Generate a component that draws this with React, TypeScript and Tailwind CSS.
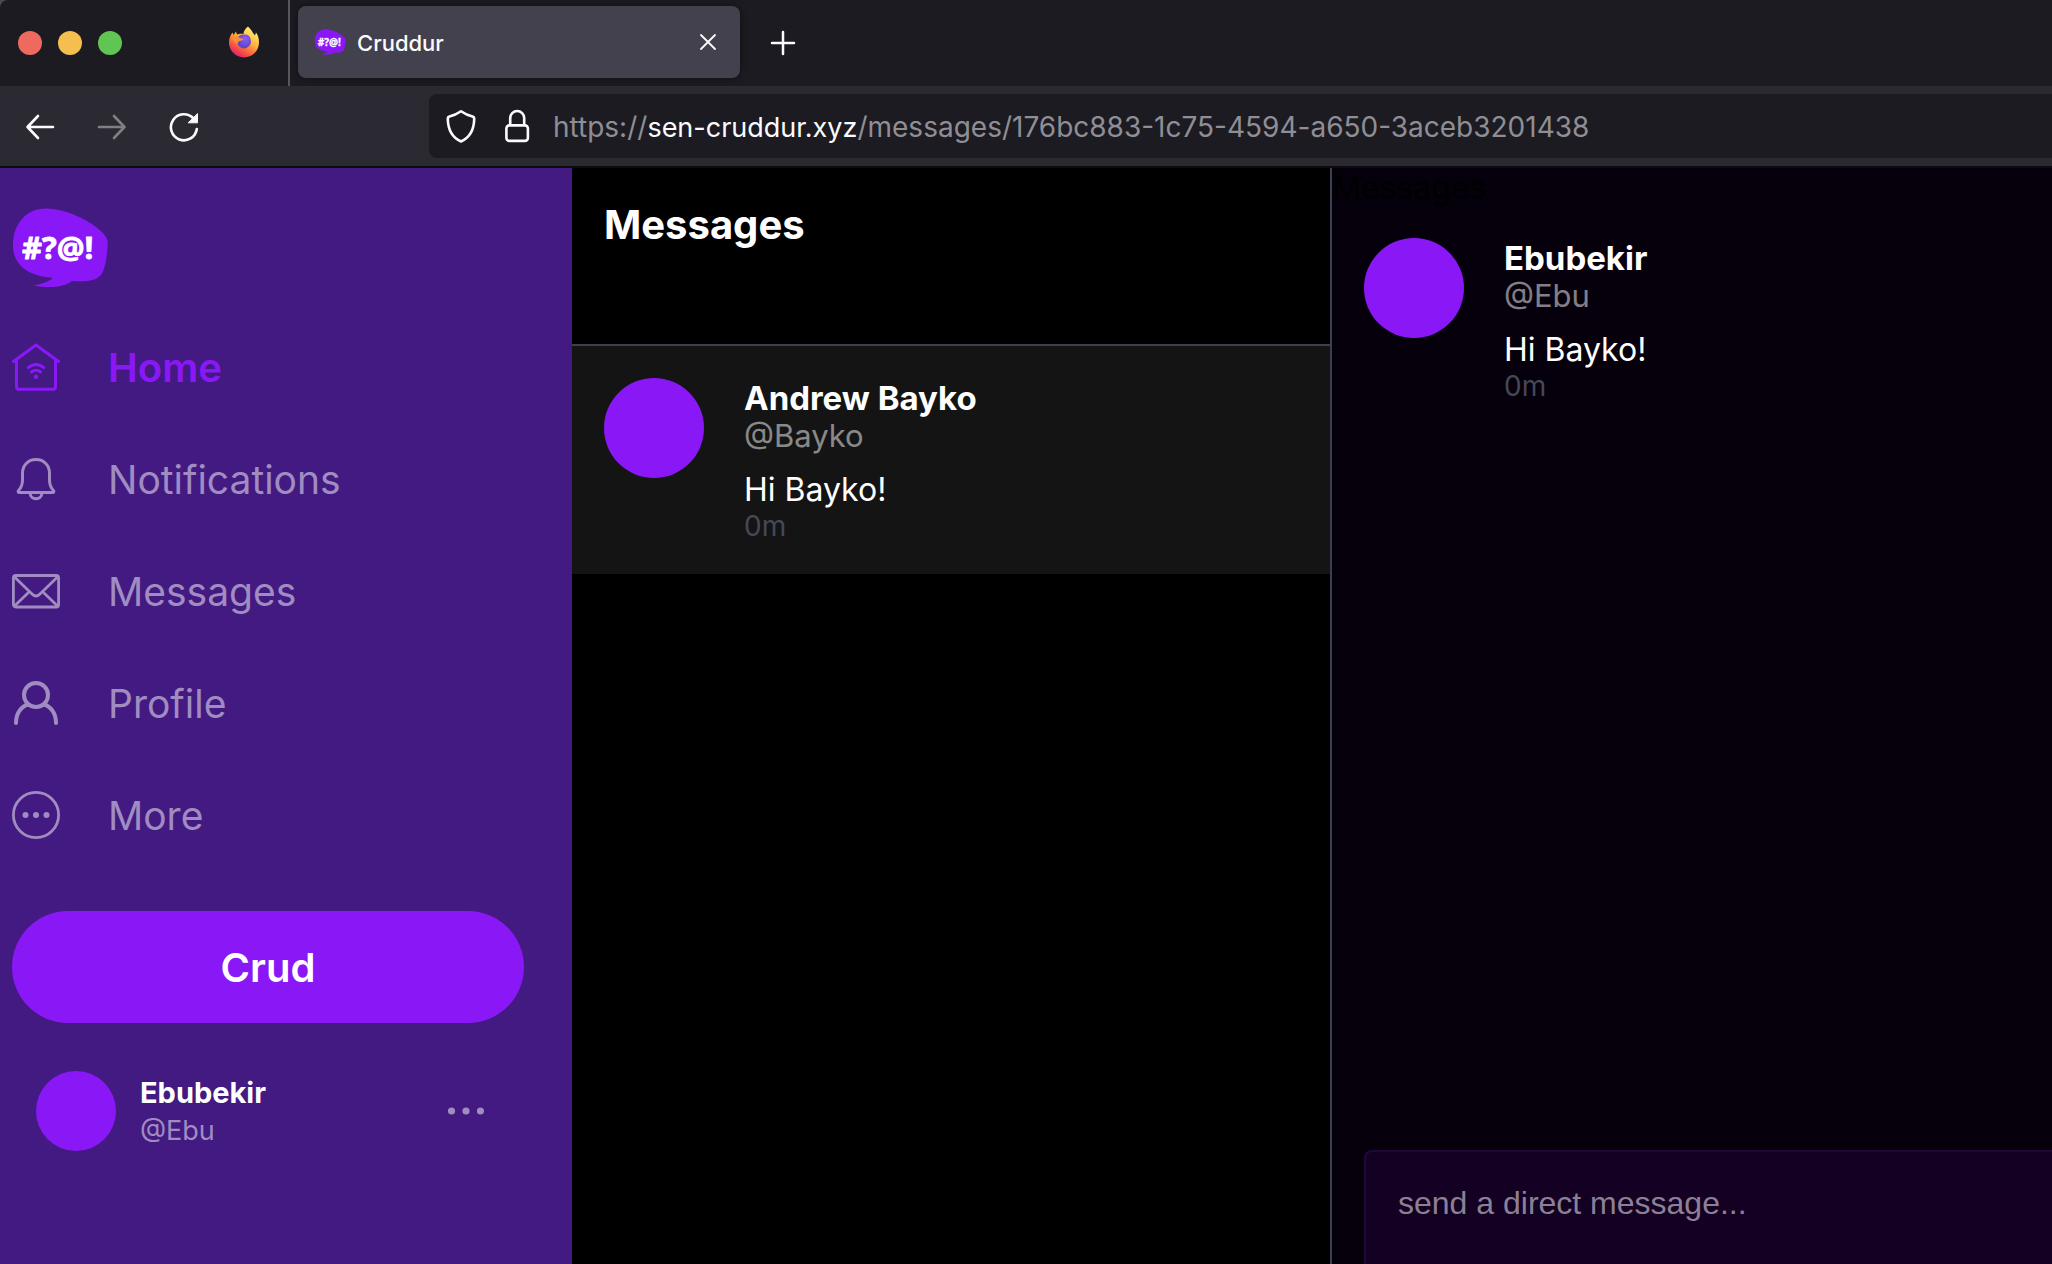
import type { ReactNode } from "react";

function Logo({ className }: { className: string }) {
  return (
    <svg viewBox="0 0 96 80" className={className} aria-hidden="true">
      <path
        d="M34 0.500C14 0.500 1 16 1 37C1 57 16 68 41 70C36 74 29 76 22 77.500C38 80.500 52 79 60 73C74 74 84 73 89 67C93 62 95.700 46 95.700 34C95.700 22 60 0.500 34 0.500Z"
        fill="#8a18f6"
      />
      <text
        x="10"
        y="51"
        fill="#fff"
        stroke="#fff"
        strokeWidth="0.800"
        strokeLinejoin="round"
        className="font-['Open_Sans',sans-serif] text-[31px] font-bold"
      >
        #?@!
      </text>
    </svg>
  );
}

function FirefoxIcon() {
  return (
    <svg viewBox="0 1 32 32" className="size-8 overflow-visible" aria-hidden="true">
      <defs>
        <linearGradient id="flame" x1="0.85" y1="0.1" x2="0.3" y2="1">
          <stop offset="0" stopColor="#fff36b" />
          <stop offset="0.4" stopColor="#ffb340" />
          <stop offset="0.75" stopColor="#f8563f" />
          <stop offset="1" stopColor="#d61f75" />
        </linearGradient>
        <radialGradient id="globe" cx="0.6" cy="0.3" r="0.8">
          <stop offset="0" stopColor="#8f5cf5" />
          <stop offset="1" stopColor="#4f40b8" />
        </radialGradient>
      </defs>
      <path
        d="M20 0.500C22 2.500 23.500 4 25 7L27 9.500L28 6.500C30 9 31 12.500 31 16.500A15 15 0 0 1 1 16.500C1 12 2.500 9 4.500 6.500L5.500 9L8 5.500L9 8.500C11 7.500 13 7.500 15.500 8C15.500 5 17.500 2.500 20 0.500Z"
        fill="url(#flame)"
      />
      <path d="M9 14C9 10 13 8 17 8.500C20 8.500 22 10 22.500 13A6.600 6.600 0 1 1 9.600 18Z" fill="url(#globe)" />
      <path
        d="M4.500 11.500C7 10 10 10.500 12 12L15.500 13C15 14.300 13.500 14.500 11.500 15C10 15.800 9.800 16.500 9.500 18C7 17 4.500 14.500 4.500 11.500Z"
        fill="#fb8f2c"
      />
    </svg>
  );
}

const HomeIcon = (
  <g fill="none" stroke="currentColor" strokeWidth="3" strokeLinecap="round" strokeLinejoin="round">
    <path d="M1.500 18.500L24 2L46.500 18.500" />
    <path d="M4.500 17V43.500Q4.500 46.300 7 46.300H41Q43.500 46.300 43.500 43.500V17" />
    <path d="M16.300 24.500Q24 18.500 31.700 24.500M19.500 29Q24 25.500 28.500 29" />
    <circle cx="24" cy="33.700" r="2.200" fill="currentColor" stroke="none" />
  </g>
);

const BellIcon = (
  <g fill="none" stroke="currentColor" strokeWidth="3" strokeLinecap="round" strokeLinejoin="round">
    <path d="M24 4.500C16 4.500 10.500 10.500 10.500 18V25C10.500 31 9 33 6.500 35.500Q5.500 37.500 7.500 37.500H40.500Q42.500 37.500 41.500 35.500C39 33 37.500 31 37.500 25V18C37.500 10.500 32 4.500 24 4.500Z" />
    <path d="M18.200 38.500C18.200 45.500 29.800 45.500 29.800 38.500" />
  </g>
);

const MailIcon = (
  <g fill="none" stroke="currentColor" strokeWidth="2.800" strokeLinecap="round" strokeLinejoin="round">
    <rect x="1.400" y="8.500" width="45.200" height="31.500" rx="2.500" />
    <path d="M2.500 10L19.500 26.500Q24 31.500 28.500 26.500L45.500 10M2.500 39L16 26M45.500 39L32 26" />
  </g>
);

const ProfileIcon = (
  <g fill="none" stroke="currentColor" strokeWidth="4" strokeLinecap="round">
    <circle cx="24" cy="16" r="12" />
    <path d="M4 44C4 34.500 9 27.500 16 25.500M44 44C44 34.500 39 27.500 32 25.500" />
  </g>
);

const MoreIcon = (
  <g fill="currentColor">
    <circle cx="24" cy="24" r="22.600" fill="none" stroke="currentColor" strokeWidth="2.800" />
    <circle cx="13.500" cy="24" r="3" />
    <circle cx="24" cy="24" r="3" />
    <circle cx="34.500" cy="24" r="3" />
  </g>
);

const navItems: { label: string; icon: ReactNode; active?: boolean }[] = [
  { label: "Home", icon: HomeIcon, active: true },
  { label: "Notifications", icon: BellIcon },
  { label: "Messages", icon: MailIcon },
  { label: "Profile", icon: ProfileIcon },
  { label: "More", icon: MoreIcon },
];

function TabBar() {
  return (
    <div className="flex h-[86px] shrink-0 items-stretch rounded-tl-lg bg-[#1c1b22]">
      <div className="flex w-[290px] items-center border-r-2 border-[#57565d] pl-[18px]">
        <div className="flex gap-4">
          <span className="size-6 rounded-full bg-[#ee6a5f]" />
          <span className="size-6 rounded-full bg-[#f5bf4f]" />
          <span className="size-6 rounded-full bg-[#61c554]" />
        </div>
        <div className="ml-auto pr-7">
          <FirefoxIcon />
        </div>
      </div>
      <div className="my-1.5 ml-2 flex h-[72px] w-[442px] items-center rounded-lg bg-[#42414d] pr-[22px] pl-4 shadow-[0_0_6px_rgba(0,0,0,0.5)]">
        <Logo className="h-[26px] w-8" />
        <span className="ml-[11px] pt-0.5 text-[22px] leading-8 font-medium text-[#fbfbfe]">Cruddur</span>
        <button type="button" aria-label="Close tab" className="ml-auto">
          <svg viewBox="0 0 20 20" className="size-5" stroke="#fbfbfe" strokeWidth="1.800" strokeLinecap="round">
            <path d="M3 3L17 17M17 3L3 17" />
          </svg>
        </button>
      </div>
      <button type="button" aria-label="New tab" className="ml-[30px]">
        <svg viewBox="0 0 26 26" className="size-[26px]" stroke="#fbfbfe" strokeWidth="2.500" strokeLinecap="round">
          <path d="M13 2V24M2 13H24" />
        </svg>
      </button>
    </div>
  );
}

function Toolbar() {
  return (
    <div className="flex h-[82px] shrink-0 items-center border-b-2 border-[#0c0c0d] bg-[#2b2a33] pl-6">
      <div className="flex w-[405px] shrink-0 gap-10">
        <button type="button" aria-label="Back">
          <svg viewBox="0 0 32 32" className="size-8" fill="none" stroke="#fbfbfe" strokeWidth="2.600" strokeLinecap="round" strokeLinejoin="round">
            <path d="M29 17H3.500M14 6L3.500 17L14 28" />
          </svg>
        </button>
        <button type="button" aria-label="Forward" disabled>
          <svg viewBox="0 0 32 32" className="size-8" fill="none" stroke="#807f86" strokeWidth="2.600" strokeLinecap="round" strokeLinejoin="round">
            <path d="M3 17H28.500M18 6L28.500 17L18 28" />
          </svg>
        </button>
        <button type="button" aria-label="Reload">
          <svg viewBox="0 0 32 32" className="size-8" fill="none" stroke="#fbfbfe" strokeWidth="2.600" strokeLinecap="round">
            <path d="M28.800 19A13 13 0 1 1 25.500 8.500" />
            <path d="M29.500 4V12.800H20.500Z" fill="#fbfbfe" stroke="#fbfbfe" strokeWidth="1" strokeLinejoin="round" />
          </svg>
        </button>
      </div>
      <div className="flex h-16 flex-1 items-center rounded-l-lg bg-[#1c1b22] pl-4">
        <svg viewBox="0 0 32 36" className="h-9 w-8" fill="none" stroke="#fbfbfe" strokeWidth="2.600" strokeLinejoin="round" aria-hidden="true">
          <path d="M16 3.200Q21.500 7 27.500 8.500Q29.300 9 29.200 11C29 21 26 29 16 33.500C6 29 3 21 2.800 11Q2.700 9 4.500 8.500Q10.500 7 16 3.200Z" />
        </svg>
        <svg viewBox="0 0 28 36" className="ml-[26px] h-9 w-7" fill="none" stroke="#fbfbfe" strokeWidth="2.600" strokeLinejoin="round" aria-hidden="true">
          <rect x="3.400" y="17.400" width="21.500" height="15.500" rx="3" />
          <path d="M7.200 17V10A7 7 0 0 1 21.200 10V17" />
        </svg>
        <p className="ml-[22px] pt-0.5 text-[28px] leading-9 whitespace-nowrap text-[#8f8e94]">
          https://<span className="text-[27px] text-[#fbfbfe]">sen-cruddur.xyz</span>
          /messages/176bc883-1c75-4594-a650-3aceb3201438
        </p>
      </div>
    </div>
  );
}

function Sidebar() {
  return (
    <aside className="flex w-[572px] shrink-0 flex-col bg-[#421a82] pt-10 pr-12 pl-3">
      <Logo className="h-20 w-24" />
      <nav className="mt-[23px] flex flex-col">
        {navItems.map(({ label, icon, active }) => (
          <a
            key={label}
            href="#"
            className={
              active
                ? "flex h-28 items-center gap-12 text-[40px] leading-[48px] font-semibold text-[#8a18f6]"
                : "flex h-28 items-center gap-12 text-[39px] leading-[48px] text-[#a08cc0]"
            }
          >
            <svg viewBox="0 0 48 48" className="size-12" aria-hidden="true">
              {icon}
            </svg>
            <span className="pt-0.5">{label}</span>
          </a>
        ))}
      </nav>
      <button
        type="button"
        className="mt-10 h-28 rounded-full bg-[#8a18f6] pt-0.5 text-[40px] leading-[48px] font-semibold text-white"
      >
        Crud
      </button>
      <div className="mt-6 flex items-center p-6">
        <span className="size-20 rounded-full bg-[#8a18f6]" />
        <div className="ml-6 pt-0.5">
          <div className="text-[29px] leading-[38px] font-bold text-white">Ebubekir</div>
          <div className="text-[27px] leading-[38px] text-[#a08cc0]">@Ebu</div>
        </div>
        <button type="button" aria-label="Account options" className="ml-auto pr-4">
          <svg viewBox="0 0 36 8" className="h-2 w-9" fill="#a08cc0">
            <circle cx="3.500" cy="4" r="3.600" />
            <circle cx="18" cy="4" r="3.600" />
            <circle cx="32.500" cy="4" r="3.600" />
          </svg>
        </button>
      </div>
    </aside>
  );
}

function MessageItem({ name, handle, text, time, selected }: { name: string; handle: string; text: string; time: string; selected?: boolean }) {
  return (
    <article className={selected ? "flex gap-10 bg-[#141414] px-8 pt-8 pb-[31px]" : "flex gap-10 px-8 pt-8 pb-[31px]"}>
      <span className="size-[100px] shrink-0 rounded-full bg-[#8a18f6]" />
      <div className="pt-px leading-[38px]">
        <div className="text-[33px] font-bold text-white">{name}</div>
        <div className="text-[31px] text-white/50">{handle}</div>
        <p className="mt-4 text-[32px] text-white">{text}</p>
        <div className="text-[28px] leading-[34px] text-[#444858]">{time}</div>
      </div>
    </article>
  );
}

export default function App() {
  return (
    <div className="flex h-screen flex-col overflow-hidden bg-[#4a4a4c] font-['Inter',sans-serif]">
      <TabBar />
      <Toolbar />
      <main className="flex min-h-0 flex-1 bg-black">
        <Sidebar />
        <section className="w-[760px] shrink-0 border-r-2 border-[#3b3f4e]">
          <header className="h-[178px] border-b-2 border-[#3b3f4e] p-8">
            <h1 className="text-[40px] leading-[50px] font-bold text-white">Messages</h1>
          </header>
          <MessageItem name="Andrew Bayko" handle="@Bayko" text="Hi Bayko!" time="0m" selected />
        </section>
        <section className="flex min-w-0 flex-1 flex-col bg-[#06000c]">
          <div className="h-[38px] text-[32px] leading-[40px] text-black">Messages</div>
          <div className="flex-1">
            <MessageItem name="Ebubekir" handle="@Ebu" text="Hi Bayko!" time="0m" />
          </div>
          <form className="flex pl-8">
            <textarea
              aria-label="Direct message"
              placeholder="send a direct message..."
              className="h-[114px] flex-1 resize-none rounded-tl-lg border-t-2 border-l-2 border-[#22063a] bg-[#140022] p-8 pb-0 font-['Liberation_Sans',sans-serif] text-[32px] leading-[38px] text-white outline-none placeholder:text-[#8c8095] placeholder:opacity-100"
            />
          </form>
        </section>
      </main>
    </div>
  );
}
